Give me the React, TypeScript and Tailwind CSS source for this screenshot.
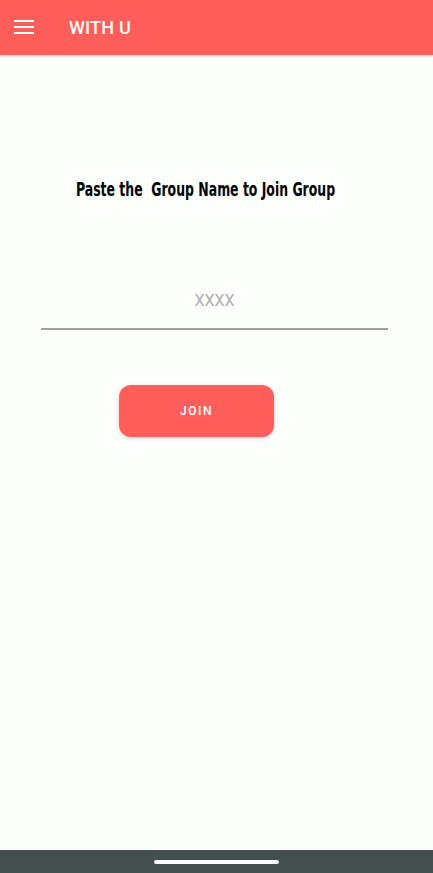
import React from "react";

export default function App() {
  return (
    <div className="w-[433px] h-[873px] flex flex-col bg-[#fdfffd] overflow-hidden" style={{ fontFamily: "Roboto, 'Noto Sans', sans-serif" }}>
      <div className="h-[55px] bg-[#ff5e5b] flex items-center shadow-[0_1px_3px_rgba(0,0,0,0.2)] shrink-0">
        <div className="w-[20px] ml-[14px] flex flex-col gap-[4px] mt-[-1px]">
          <div className="h-[2px] bg-white" />
          <div className="h-[2px] bg-white" />
          <div className="h-[2px] bg-white" />
        </div>
        <div className="ml-[35px] text-white text-[18px] font-medium tracking-[0.2px]">WITH U</div>
      </div>
      <div className="flex-1 flex flex-col">
        <div className="mt-[123px] ml-[76px] h-[24px]">
          <div
            className="inline-block origin-left scale-x-[0.71] whitespace-nowrap text-black text-[19.5px] font-bold leading-[24px]"
            style={{ fontFamily: "'DejaVu Sans Condensed', 'DejaVu Sans', sans-serif" }}
          >
            Paste the&nbsp; Group Name to Join Group
          </div>
        </div>
        <div className="mt-[85px] ml-[41px] mr-[45px] border-b-2 border-[#a0a0a0] h-[43px] flex items-start justify-center pt-[2px]">
          <span className="text-[#b0b0b0] text-[16px] leading-[24px]">XXXX</span>
        </div>
        <div className="mt-[55px] ml-[119px] w-[155px] h-[52px] rounded-[12px] bg-[#ff5e5b] shadow-[0_1px_4px_rgba(0,0,0,0.18)] flex items-center justify-center">
          <span className="text-white text-[12px] font-medium tracking-[1.5px]">JOIN</span>
        </div>
      </div>
      <div className="h-[23px] bg-[#434f4e] flex items-center justify-center shrink-0">
        <div className="w-[125px] h-[4px] rounded-full bg-white" />
      </div>
    </div>
  );
}
